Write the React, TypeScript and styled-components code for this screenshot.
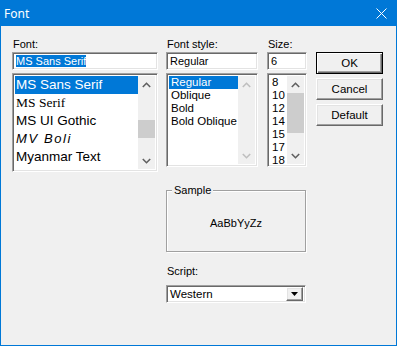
import { FC } from "react";
import styled, { createGlobalStyle, css } from "styled-components";

const GlobalStyle = createGlobalStyle`
  body {
    margin: 0;
    background: #ffffff;
    font-family: "Liberation Sans", Arial, sans-serif;
  }
`;

const Window = styled.div`
  width: 397px;
  height: 346px;
  box-sizing: border-box;
  border: 1px solid #0078d7;
  background: #f0f0f0;
  display: flex;
  flex-direction: column;
  color: #000;
`;

const TitleBar = styled.div`
  height: 25px;
  background: #0078d7;
  display: flex;
  align-items: center;
  justify-content: space-between;
  padding: 0 9px 0 3px;
  color: #fff;
  font-family: "Noto Sans", "Open Sans", sans-serif;
  font-size: 12px;
`;

const Body = styled.div`
  display: flex;
  padding: 11px 0 0 11px;
`;

const Column = styled.div<{ $width: number }>`
  display: flex;
  flex-direction: column;
  width: ${(p) => p.$width}px;
`;

const MiddleColumn = styled.div`
  display: flex;
  flex-direction: column;
  margin-left: 8px;
  width: 141px;
`;

const TopRow = styled.div`
  display: flex;
  gap: 9px;
`;

const Label = styled.div`
  height: 15px;
  line-height: 15px;
  font-size: 11px;
  padding-left: 1px;
`;

const sunken = css`
  box-sizing: border-box;
  border: 1px solid;
  border-color: #a0a0a0 #ffffff #ffffff #a0a0a0;
  box-shadow: inset 1px 1px 0 #696969, inset -1px -1px 0 #e3e3e3;
  background: #fff;
`;

const Edit = styled.div`
  ${sunken};
  height: 18px;
  padding: 2px 2px 0 3px;
  font-size: 11px;
  line-height: 13px;
  white-space: nowrap;
`;

const Selected = styled.span`
  background: #0078d7;
  color: #fff;
`;

const List = styled.div<{ $height: number }>`
  ${sunken};
  margin-top: 3px;
  height: ${(p) => p.$height}px;
  padding: 2px;
  display: flex;
  overflow: hidden;
`;

const Items = styled.div`
  flex: 1;
  display: flex;
  flex-direction: column;
  min-width: 0;
`;

const Item = styled.div<{ $h: number; $selected?: boolean }>`
  height: ${(p) => p.$h}px;
  line-height: ${(p) => p.$h}px;
  padding-left: 2px;
  font-size: 11.5px;
  white-space: nowrap;
  ${(p) =>
    p.$selected &&
    css`
      background: #0078d7;
      color: #fff;
    `}
`;

const FontItem = styled(Item)<{ $family: string; $italic?: boolean }>`
  font-family: ${(p) => p.$family};
  font-size: 13.5px;
  padding-left: 1px;
  ${(p) =>
    p.$italic &&
    css`
      font-style: italic;
      letter-spacing: 1.6px;
      font-size: 13px;
    `}
`;

const Scroll = styled.div`
  width: 17px;
  display: flex;
  flex-direction: column;
  background: #f0f0f0;
`;

const Arrow = styled.div`
  height: 17px;
  display: flex;
  align-items: center;
  justify-content: center;
`;

const Track = styled.div`
  flex: 1;
  display: flex;
  flex-direction: column;
`;

const Thumb = styled.div<{ $top: number; $h: number }>`
  margin-top: ${(p) => p.$top}px;
  height: ${(p) => p.$h}px;
  background: #cdcdcd;
`;

const Chevron: FC<{ up?: boolean; disabled?: boolean }> = ({ up, disabled }) => (
  <svg width="9" height="6" viewBox="0 0 9 6">
    <polyline
      points={up ? "0.8,5 4.5,1.3 8.2,5" : "0.8,1 4.5,4.7 8.2,1"}
      fill="none"
      stroke={disabled ? "#bfbfbf" : "#606060"}
      strokeWidth="1.6"
    />
  </svg>
);

const ScrollBar: FC<{ thumbTop?: number; thumbHeight?: number; disabled?: boolean }> = ({
  thumbTop,
  thumbHeight,
  disabled,
}) => (
  <Scroll>
    <Arrow>
      <Chevron up disabled={disabled} />
    </Arrow>
    <Track>
      {thumbHeight !== undefined && <Thumb $top={thumbTop ?? 0} $h={thumbHeight} />}
    </Track>
    <Arrow>
      <Chevron disabled={disabled} />
    </Arrow>
  </Scroll>
);

const Group = styled.div`
  position: relative;
  margin-top: 23px;
  width: 140px;
  height: 62px;
  box-sizing: border-box;
  border: 1px solid #a0a0a0;
  box-shadow: 1px 1px 0 #fff, inset 1px 1px 0 #fff;
  display: flex;
  align-items: center;
  justify-content: center;
  padding-top: 4px;
  font-size: 11px;
`;

const GroupTitle = styled.span`
  position: absolute;
  top: -8px;
  left: 5px;
  padding: 0 2px;
  background: #f0f0f0;
  font-size: 11px;
  line-height: 14px;
`;

const ScriptLabel = styled(Label)`
  margin-top: 12px;
`;

const Combo = styled.div`
  ${sunken};
  margin-top: 6px;
  width: 140px;
  height: 18px;
  padding: 2px;
  display: flex;
  align-items: center;
  font-size: 11.5px;
`;

const ComboText = styled.div`
  flex: 1;
  padding-left: 1px;
`;

const raised = css`
  box-sizing: border-box;
  border: 1px solid;
  border-color: #ffffff #696969 #696969 #ffffff;
  box-shadow: inset -1px -1px 0 #a0a0a0, inset 1px 1px 0 #e3e3e3;
  background: #f0f0f0;
`;

const DropButton = styled.div`
  ${raised};
  width: 17px;
  height: 14px;
  display: flex;
  align-items: center;
  justify-content: center;
`;

const Buttons = styled.div`
  display: flex;
  flex-direction: column;
  gap: 4px;
  margin: 15px 0 0 9px;
`;

const Button = styled.div<{ $default?: boolean }>`
  ${raised};
  width: 67px;
  height: 22px;
  display: flex;
  align-items: center;
  justify-content: center;
  font-size: 11.5px;
  ${(p) =>
    p.$default &&
    css`
      border: 1px solid #000;
      box-shadow: inset 1px 1px 0 #fff, inset -1px -1px 0 #696969, inset -2px -2px 0 #a0a0a0;
    `}
`;

const fonts = [
  { name: "MS Sans Serif", family: '"Liberation Sans", sans-serif' },
  { name: "MS Serif", family: '"Liberation Serif", serif' },
  { name: "MS UI Gothic", family: '"Liberation Sans", sans-serif' },
  { name: "MV Boli", family: '"Liberation Sans", sans-serif', italic: true },
  { name: "Myanmar Text", family: '"Liberation Sans", sans-serif' },
];

const styles = ["Regular", "Oblique", "Bold", "Bold Oblique"];
const sizes = ["8", "10", "12", "14", "15", "17", "18"];

export default function App() {
  return (
    <>
      <GlobalStyle />
      <Window>
        <TitleBar>
          <span>Font</span>
          <svg width="11" height="11" viewBox="0 0 11 11">
            <path d="M0.5,0.5 L10.5,10.5 M10.5,0.5 L0.5,10.5" stroke="#fff" strokeWidth="1" />
          </svg>
        </TitleBar>
        <Body>
          <Column $width={146}>
            <Label>Font:</Label>
            <Edit>
              <Selected>MS Sans Serif</Selected>
            </Edit>
            <List $height={99}>
              <Items>
                {fonts.map((f, i) => (
                  <FontItem key={f.name} $h={18} $family={f.family} $italic={f.italic} $selected={i === 0}>
                    {f.name}
                  </FontItem>
                ))}
              </Items>
              <ScrollBar thumbTop={27} thumbHeight={18} />
            </List>
          </Column>

          <MiddleColumn>
            <TopRow>
              <Column $width={92}>
                <Label>Font style:</Label>
                <Edit>Regular</Edit>
                <List $height={94}>
                  <Items>
                    {styles.map((s, i) => (
                      <Item key={s} $h={13} $selected={i === 0}>
                        {s}
                      </Item>
                    ))}
                  </Items>
                  <ScrollBar disabled />
                </List>
              </Column>
              <Column $width={40}>
                <Label>Size:</Label>
                <Edit>6</Edit>
                <List $height={94}>
                  <Items>
                    {sizes.map((s) => (
                      <Item key={s} $h={13}>
                        {s}
                      </Item>
                    ))}
                  </Items>
                  <ScrollBar thumbTop={0} thumbHeight={40} />
                </List>
              </Column>
            </TopRow>

            <Group>
              <GroupTitle>Sample</GroupTitle>
              AaBbYyZz
            </Group>

            <ScriptLabel>Script:</ScriptLabel>
            <Combo>
              <ComboText>Western</ComboText>
              <DropButton>
                <svg width="7" height="4" viewBox="0 0 7 4">
                  <polygon points="0,0 7,0 3.5,4" fill="#000" />
                </svg>
              </DropButton>
            </Combo>
          </MiddleColumn>

          <Buttons>
            <Button $default>OK</Button>
            <Button>Cancel</Button>
            <Button>Default</Button>
          </Buttons>
        </Body>
      </Window>
    </>
  );
}
